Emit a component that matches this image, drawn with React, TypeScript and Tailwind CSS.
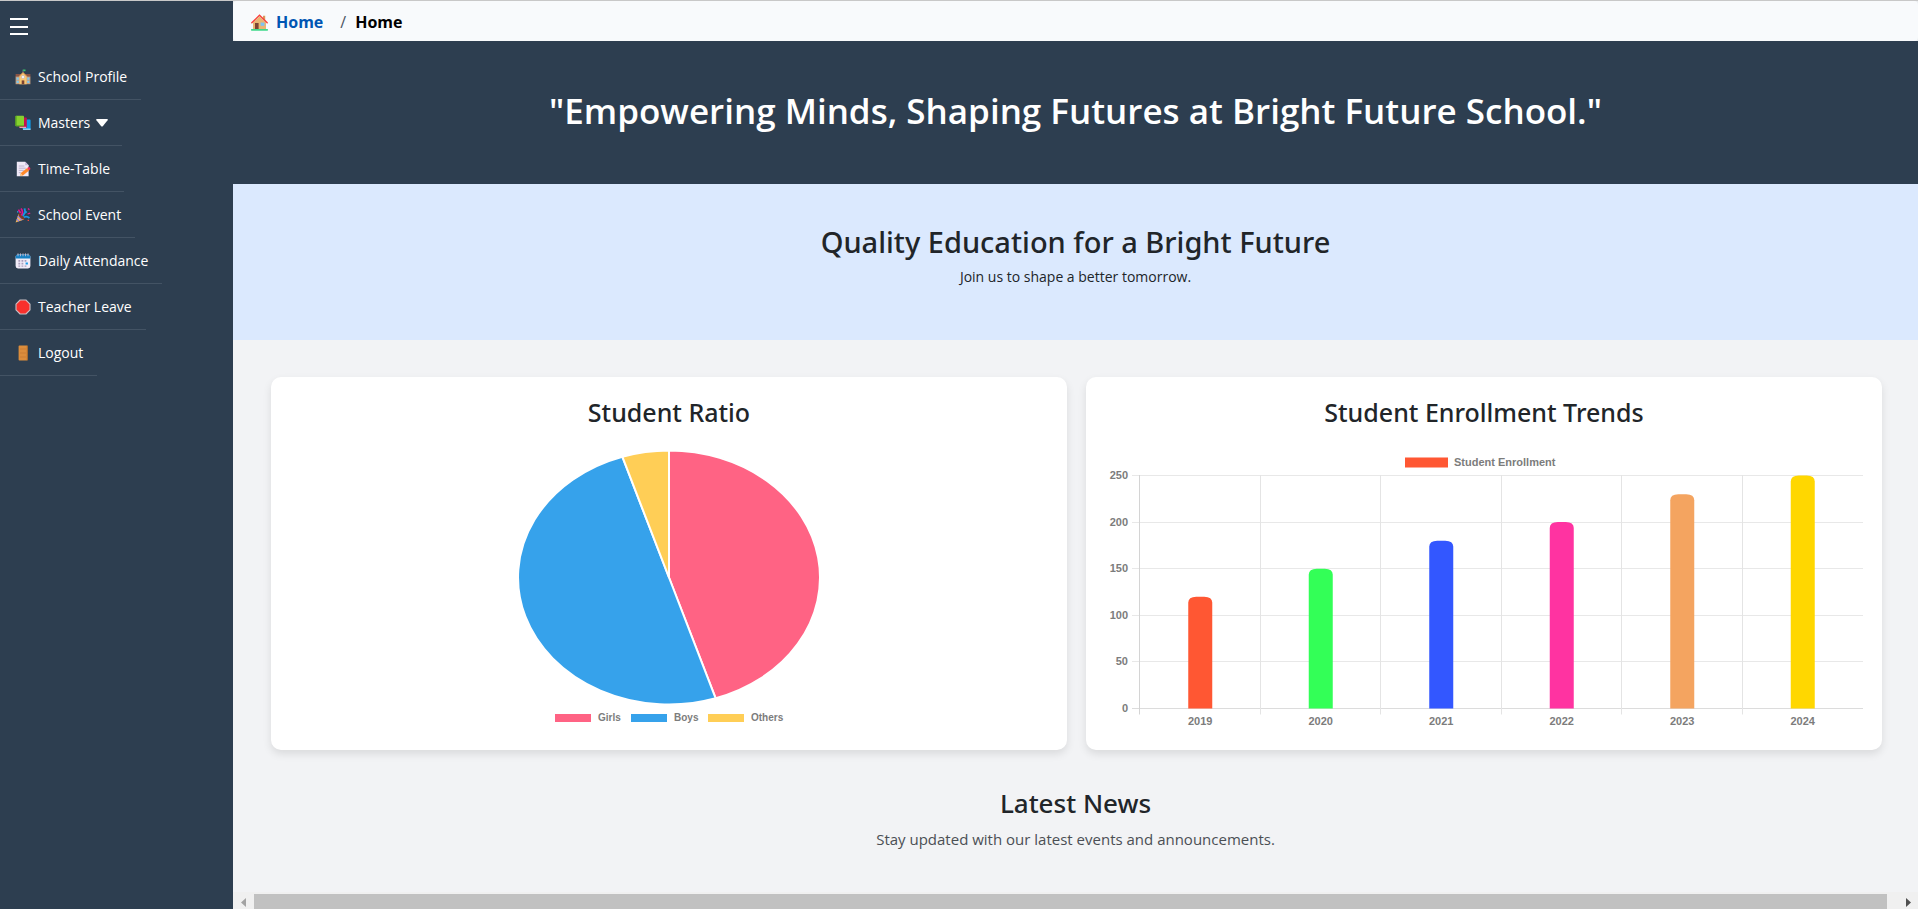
import type { ReactNode } from 'react';

const HouseIcon = () => (
  <svg viewBox="0 0 17 17" className="h-[17px] w-[17px]" aria-hidden="true">
    <path d="M2 8.5 8.5 2.4 15 8.5V15H2Z" fill="#e9b673" />
    <path d="M12 1.8h2.2v5L12 5Z" fill="#d99a5b" />
    <path d="M.8 8.8 8.5 1.2l7.7 7.6" fill="none" stroke="#f8403c" strokeWidth="1.4" strokeLinecap="round" />
    <rect x="4" y="9" width="3.6" height="6" fill="#7d4533" />
    <rect x="9.6" y="8.6" width="3.8" height="3.2" fill="#7cc4f5" />
    <rect x="0" y="15" width="17" height="1.7" rx=".6" fill="#3fd98a" />
  </svg>
);

const SchoolIcon = () => (
  <svg viewBox="0 0 16 16" className="h-4 w-4" aria-hidden="true">
    <rect x=".6" y="5" width="14.8" height="3" fill="#8a5546" />
    <rect x=".6" y="7.6" width="14.8" height="7.6" fill="#c79f7e" />
    <path d="M1.6 8.6h2.2v2.2H1.6zM1.6 11.8h2.2V14H1.6zM12.2 8.6h2.2v2.2h-2.2zM12.2 11.8h2.2V14h-2.2z" fill="#7fc8ee" />
    <path d="M4.4 7.2 8 3.4l3.6 3.8v8H4.4Z" fill="#f8c772" />
    <path d="M4 7.6 8 3.4l4 4.2" fill="none" stroke="#e29a4e" strokeWidth=".9" />
    <path d="M8 3.6V.6" stroke="#9a9a9a" strokeWidth=".6" />
    <path d="M8.2.5h2.3v1.7H8.2z" fill="#35c26b" />
    <circle cx="8" cy="8" r="1.5" fill="#fff" stroke="#a8a0c0" strokeWidth=".5" />
    <rect x="6.7" y="11.4" width="2.6" height="3.8" fill="#7a4332" />
  </svg>
);

const BooksIcon = () => (
  <svg viewBox="0 0 16 16" className="h-4 w-4" aria-hidden="true">
    <rect x="8" y="4.6" width="7.6" height="10" rx=".8" fill="#1099e8" />
    <path d="M7.5 13.6h8.1v1.4H8.2z" fill="#8acdf2" />
    <rect x="4.4" y="2.4" width="7.4" height="10.4" rx=".8" fill="#c5104f" />
    <path d="M4 11.8h7v1.2H4.8z" fill="#eaa3b9" />
    <rect x=".4" y=".8" width="8.6" height="10.4" rx=".8" fill="#86d12e" />
    <path d="M.4 1.3v9.2l1.1.7V.8Z" fill="#4f9a1e" />
    <path d="M1 10.4H9v.9H1.2z" fill="#4f8f22" />
  </svg>
);

const MemoIcon = () => (
  <svg viewBox="0 0 16 16" className="h-4 w-4" aria-hidden="true">
    <path d="M1.8.8h8.4l3.4 3.4v11H1.8Z" fill="#efe9f7" />
    <path d="M10.2.8v3.4h3.4Z" fill="#c5b7d9" />
    <path d="M3.8 5h5.6M3.8 7.2h7M3.8 9.4h5M3.8 11.6h2" stroke="#b3a6c8" strokeWidth=".8" />
    <path d="m12.2 7 1.9 2.4-6.2 5L5 15l.8-3Z" fill="#ff8a2b" />
    <path d="m12.2 7 1.1-.8c1.2-.5 2.6 1.3 1.9 2.3l-1.1.9Z" fill="#f0325f" />
    <path d="m5.8 12.2 1.9 2.2L5 15Z" fill="#f6cf9d" />
  </svg>
);

const PartyIcon = () => (
  <svg viewBox="0 0 16 16" className="h-4 w-4" aria-hidden="true">
    <path d="m.6 15.4 3-8.6 5.6 5.6Z" fill="#f2b45c" />
    <path d="m1.8 12 2.2 2.2M2.8 9.2l4 4" stroke="#8f7bf0" strokeWidth="1.1" />
    <ellipse cx="6.6" cy="9.4" rx="1.8" ry="3.9" transform="rotate(-45 6.6 9.4)" fill="#7b3a2a" />
    <path d="M6.4 8.6C7.8 6.8 7.8 4 6 1.6M3.4 2.6 5.6 6" stroke="#e3108c" strokeWidth="1.7" fill="none" />
    <path d="M8 9.2c1-2 .8-4.2 3.8-4.4M8.8 10.2c2-.9 4-.7 5.6.9M9.6 1.4l.6 4" stroke="#1795e6" strokeWidth="1.8" fill="none" />
    <path d="M2 4.2h1.3v1.3H2z" fill="#2aa6f0" />
    <path d="m13 1.6 1.4 1.2M12.6 7l2.6-.8" stroke="#ea1b94" strokeWidth="1.3" />
    <path d="M12.6 12.8h1.4v1.3h-1.4z" fill="#f04a3c" />
  </svg>
);

const CalendarIcon = () => (
  <svg viewBox="0 0 16 16" className="h-4 w-4" aria-hidden="true">
    <rect x=".6" y="1.4" width="14.8" height="14" rx="2.4" fill="#f1ecf8" />
    <path d="M.6 5.4V3.8a2.4 2.4 0 0 1 2.4-2.4h10a2.4 2.4 0 0 1 2.4 2.4v1.6Z" fill="#1580c4" />
    <path d="M3 .4v2.8M5.5 .4v2.8M8 .4v2.8M10.5 .4v2.8M13 .4v2.8" stroke="#c4bdd2" strokeWidth=".9" />
    <path d="M3.4 7h1.8v1.7H3.4zM6.5 7h1.8v1.7H6.5zM9.6 7h1.8v1.7H9.6zM3.4 9.7h1.8v1.7H3.4zM6.5 9.7h1.8v1.7H6.5zM3.4 12.4h1.8v1.4H3.4zM6.5 12.4h1.8v1.4H6.5zM9.6 12.4h1.8v1.4H9.6z" fill="#a99dbb" />
    <rect x="10.6" y="9.5" width="2.3" height="2" fill="#189be8" />
  </svg>
);

const StopIcon = () => (
  <svg viewBox="0 0 16 16" className="h-4 w-4" aria-hidden="true">
    <path d="M5.1 1h5.8L15 5.1v5.8L10.9 15H5.1L1 10.9V5.1Z" fill="#f9302c" stroke="#c9bfc4" strokeWidth="1.1" strokeLinejoin="round" />
  </svg>
);

const DoorIcon = () => (
  <svg viewBox="0 0 16 16" className="h-4 w-4" aria-hidden="true">
    <rect x="3.6" y=".6" width="9" height="15" rx=".8" fill="#dc8d3c" />
    <path d="M11.8.6h.8v15h-.8z" fill="#b36a26" />
    <path d="M5 4h6M5 8h6M5 12h6" stroke="#c67a30" strokeWidth=".7" />
  </svg>
);

const menu: { label: string; icon: ReactNode; expandable?: boolean }[] = [
  { label: 'School Profile', icon: <SchoolIcon /> },
  { label: 'Masters', icon: <BooksIcon />, expandable: true },
  { label: 'Time-Table', icon: <MemoIcon /> },
  { label: 'School Event', icon: <PartyIcon /> },
  { label: 'Daily Attendance', icon: <CalendarIcon /> },
  { label: 'Teacher Leave', icon: <StopIcon /> },
  { label: 'Logout', icon: <DoorIcon /> },
];

const itemClass =
  'flex h-[46px] items-center gap-[7px] border-b border-[#435364] pl-[15px] pr-[14px] text-[14px] text-white';

function Sidebar() {
  return (
    <aside className="flex w-[233px] shrink-0 flex-col bg-[#2d3e50]">
      <button aria-label="Toggle menu" className="ml-[10px] mt-[17px] h-[18px] w-[18px] text-white">
        <svg viewBox="0 0 18 18" className="h-[18px] w-[18px]" fill="currentColor">
          <path d="M0 0h18v2H0zM0 8h18v2H0zM0 15h18v2H0z" />
        </svg>
      </button>
      <nav className="mt-[18px]">
        <ul className="flex flex-col items-start">
          {menu.map((m) => (
            <li key={m.label}>
              {m.expandable ? (
                <button className={itemClass} aria-expanded="false">
                  {m.icon}
                  <span className="flex items-center gap-[6px]">
                    {m.label}
                    <svg viewBox="0 0 12 8" className="h-2 w-3" fill="currentColor" aria-hidden="true">
                      <path d="M1 0h10q1.4 0 .6 1.3L7 7q-1 1.2-2 0L.4 1.3Q-.4 0 1 0Z" />
                    </svg>
                  </span>
                </button>
              ) : (
                <a href="#" className={itemClass}>
                  {m.icon}
                  {m.label}
                </a>
              )}
            </li>
          ))}
        </ul>
      </nav>
    </aside>
  );
}

const slices = [
  { label: 'Girls', value: 45, color: '#ff6384', legendX: 284 },
  { label: 'Boys', value: 50, color: '#36a2eb', legendX: 360 },
  { label: 'Others', value: 5, color: '#ffce56', legendX: 437 },
];

function PieChart() {
  const cx = 379;
  const cy = 134.5;
  const rx = 151;
  const ry = 127;
  let start = 0;
  return (
    <svg viewBox="0 0 758 288" className="h-auto w-full" role="img" aria-label="Student ratio pie chart">
      {slices.map((s) => {
        const end = start + (s.value / 100) * 2 * Math.PI;
        const x1 = cx + rx * Math.sin(start);
        const y1 = cy - ry * Math.cos(start);
        const x2 = cx + rx * Math.sin(end);
        const y2 = cy - ry * Math.cos(end);
        const large = s.value > 50 ? 1 : 0;
        start = end;
        return (
          <path
            key={s.label}
            d={`M${cx} ${cy}L${x1} ${y1}A${rx} ${ry} 0 ${large} 1 ${x2} ${y2}Z`}
            fill={s.color}
            stroke="#fff"
            strokeWidth="2"
            strokeLinejoin="round"
          />
        );
      })}
      {slices.map((s) => (
        <g key={s.label}>
          <rect x={s.legendX - 19} y="271" width="36" height="8" fill={s.color} />
          <text x={s.legendX + 24} y="278" className="fill-[#7c7c7c] text-[10px] font-bold">
            {s.label}
          </text>
        </g>
      ))}
    </svg>
  );
}

const bars = [
  { year: '2019', value: 120, color: '#ff5733' },
  { year: '2020', value: 150, color: '#33ff57' },
  { year: '2021', value: 180, color: '#3357ff' },
  { year: '2022', value: 200, color: '#ff33a1' },
  { year: '2023', value: 230, color: '#f4a460' },
  { year: '2024', value: 250, color: '#ffd700' },
];

function BarChart() {
  const left = 35;
  const bottom = 265.5;
  const step = 120.5;
  const unit = 233 / 250;
  return (
    <svg viewBox="0 0 758 288" className="h-auto w-full" role="img" aria-label="Student enrollment bar chart">
      <rect x="300" y="14.5" width="43" height="10" fill="#ff5733" />
      <text x="349" y="23" className="fill-[#7c7c7c] text-[11px] font-bold">
        Student Enrollment
      </text>
      {[0, 50, 100, 150, 200, 250].map((v) => {
        const y = Math.floor(bottom - v * unit) + 0.5;
        return (
          <g key={v}>
            <path d={`M27 ${y}H758`} stroke={v === 0 ? '#dcdcdc' : '#e8e8e8'} />
            <text x="23" y={y + 3} textAnchor="end" className="fill-[#7c7c7c] text-[11px] font-bold">
              {v}
            </text>
          </g>
        );
      })}
      {bars.map((b, i) => (
        <path
          key={b.year}
          d={`M${Math.round(left + i * step) - 0.5} 32V271.5`}
          stroke={i === 0 ? '#d4d4d4' : '#e4e4e4'}
        />
      ))}
      {bars.map((b, i) => {
        const x = left + (i + 0.5) * step - 12;
        const top = bottom - b.value * unit;
        return (
          <g key={b.year}>
            <path
              d={`M${x} ${bottom}V${top + 6}Q${x} ${top} ${x + 8} ${top}H${x + 16}Q${x + 24} ${top} ${x + 24} ${top + 6}V${bottom}Z`}
              fill={b.color}
            />
            <text x={x + 12} y="282" textAnchor="middle" className="fill-[#7c7c7c] text-[11px] font-bold">
              {b.year}
            </text>
          </g>
        );
      })}
    </svg>
  );
}

function ChartCard({ title, children }: { title: string; children: ReactNode }) {
  return (
    <section className="rounded-[10px] bg-white p-[19px] shadow-[0_4px_8px_rgba(0,0,0,0.1)]">
      <h3 className="mb-[15px] text-center font-['Noto_Sans',sans-serif] text-[25px] font-medium leading-8">{title}</h3>
      <div className="font-['Liberation_Sans',sans-serif]">{children}</div>
    </section>
  );
}

function HorizontalScrollbar() {
  return (
    <div className="flex h-[17px] shrink-0 bg-[#f0f0f0] pt-[2px]">
      <button aria-label="Scroll left" className="flex w-[21px] items-center justify-center pt-[2px] text-[#a3a3a3]">
        <svg viewBox="0 0 5 9" className="h-[9px] w-[5px]" fill="currentColor">
          <path d="M5 0v9L0 4.5Z" />
        </svg>
      </button>
      <div className="flex-1 bg-[#c1c1c1]" />
      <button aria-label="Scroll right" className="flex w-[31px] items-center justify-end pr-[7px] pt-[2px] text-[#505050]">
        <svg viewBox="0 0 5 9" className="h-[9px] w-[5px]" fill="currentColor">
          <path d="M0 0v9l5-4.5Z" />
        </svg>
      </button>
    </div>
  );
}

export default function App() {
  return (
    <div className="flex h-screen border-t border-[#c8c8c8] bg-[#f2f3f5] font-['Open_Sans','Noto_Sans',sans-serif] text-[#212529]">
      <Sidebar />
      <div className="flex min-w-0 flex-1 flex-col">
        <main className="min-h-0 flex-1 overflow-hidden">
          <nav aria-label="Breadcrumb" className="bg-[#e9ecef]">
            <ol className="flex h-10 items-center rounded bg-[#f8fafc] pl-[18px] pt-[2px] text-[16px] font-bold leading-6">
              <li>
                <a href="#" className="flex items-center gap-2 text-[#0056b3]">
                  <HouseIcon />
                  Home
                </a>
              </li>
              <li aria-hidden="true" className="ml-[17px] mr-[9px] font-normal text-[#4b5563]">/</li>
              <li className="text-black">Home</li>
            </ol>
          </nav>
          <header className="h-[143px] bg-[#2d3e50] pt-[46px] text-center text-white">
            <h1 className="text-[35px] font-semibold leading-[48px]">
              "Empowering Minds, Shaping Futures at Bright Future School."
            </h1>
          </header>
          <section className="h-[156px] bg-[#dbe9fe] pt-10 text-center">
            <h2 className="font-['Noto_Sans',sans-serif] text-[29px] font-medium leading-9">
              Quality Education for a Bright Future
            </h2>
            <p className="mt-[5px] text-[14px] leading-6">Join us to shape a better tomorrow.</p>
          </section>
          <div className="grid grid-cols-2 gap-[19px] pb-[37px] pl-[38px] pr-9 pt-[37px]">
            <ChartCard title="Student Ratio">
              <PieChart />
            </ChartCard>
            <ChartCard title="Student Enrollment Trends">
              <BarChart />
            </ChartCard>
          </div>
          <section className="text-center">
            <h2 className="font-['Noto_Sans',sans-serif] text-[26px] font-medium leading-8">Latest News</h2>
            <p className="mt-2 text-[15px] leading-6 text-[#4b4f54]">
              Stay updated with our latest events and announcements.
            </p>
          </section>
        </main>
        <HorizontalScrollbar />
      </div>
    </div>
  );
}
